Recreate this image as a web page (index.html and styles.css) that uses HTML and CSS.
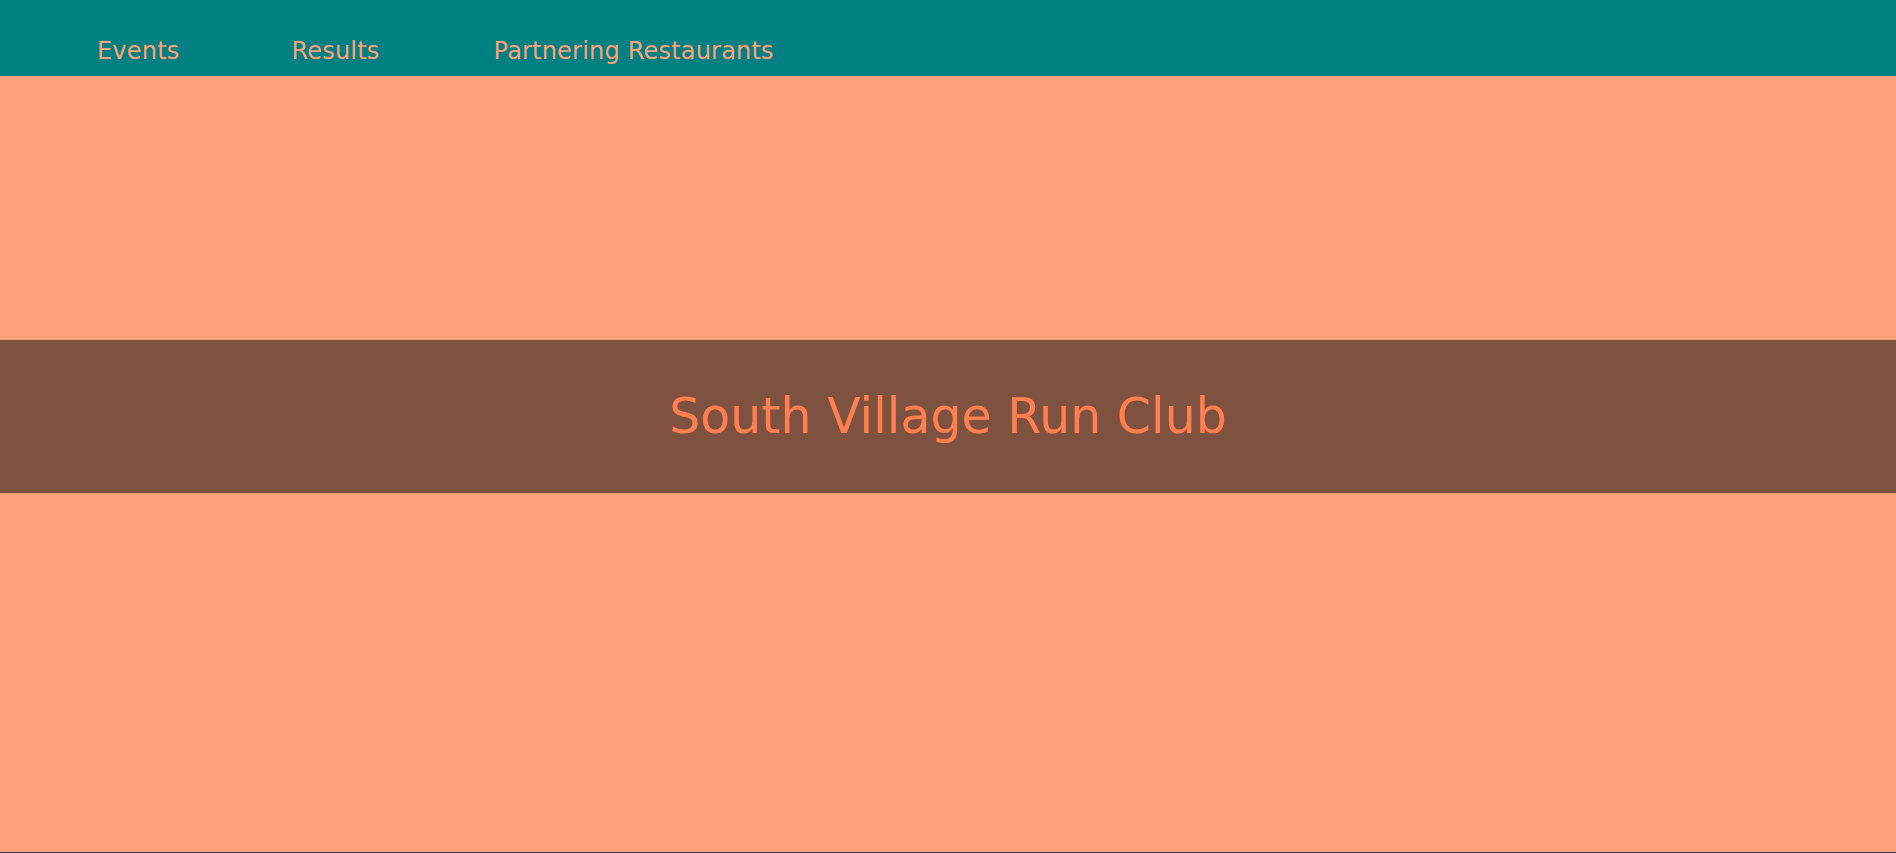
FILE: index.html
```html
<!DOCTYPE html>
<html lang="en">
<head>
<meta charset="utf-8">
<title>South Village Run Club</title>
<link rel="stylesheet" href="styles.css">
</head>
<body>
<header class="topbar">
  <nav class="nav">
    <a class="nav-link nav-events" href="#">Events</a>
    <a class="nav-link nav-results" href="#">Results</a>
    <a class="nav-link" href="#">Partnering Restaurants</a>
  </nav>
</header>
<main class="page">
  <div class="spacer-top"></div>
  <section class="banner">
    <h1 class="title">South Village Run Club</h1>
  </section>
  <div class="spacer-bottom"></div>
</main>
</body>
</html>
```

FILE: styles.css
```css
* { box-sizing: border-box; }
html, body { margin: 0; padding: 0; }
body {
  background: #ffa07a;
  font-family: "DejaVu Sans", "Noto Sans", sans-serif;
  height: 853px;
  overflow: hidden;
}
.topbar {
  background: #008080;
  height: 76px;
  display: flex;
  align-items: flex-end;
}
.nav {
  display: flex;
  padding-left: 97px;
  padding-bottom: 12px;
}
.nav-link {
  color: #ffa07a;
  text-decoration: none;
  font-size: 24px;
  line-height: 26px;
  letter-spacing: 0.2px;
}
.nav-events { margin-right: 112px; }
.nav-results { margin-right: 114px; }
.page {
  display: flex;
  flex-direction: column;
  height: 777px;
  border-bottom: 1px solid #4a3a48;
}
.spacer-top { height: 264px; }
.banner {
  height: 153px;
  background: #7f523f;
  display: flex;
  align-items: center;
  justify-content: center;
}
.title {
  margin: 0;
  color: #ff7f50;
  font-weight: normal;
  font-size: 49px;
  line-height: 1;
}
.spacer-bottom { flex: 1; }
```
